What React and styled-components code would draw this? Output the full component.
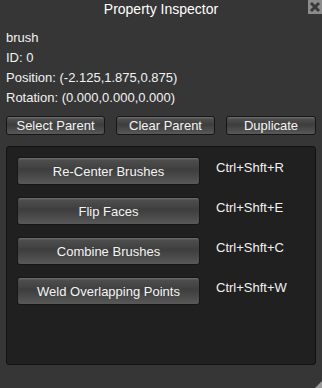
import React from 'react';
import styled, { createGlobalStyle } from 'styled-components';

const Global = createGlobalStyle`
  html, body {
    margin:0;
    padding:0;
    background:#363636;
  }
  body{
    font-family:"Liberation Sans", Arial, sans-serif;
    color:#f0f0f0;
  }
`

const Window = styled.div`
  width:322px;
  height:388px;
  background:#363636;
  position:relative;
  overflow:hidden;
  display:flex;
  flex-direction:column;
`

const TitleBar = styled.div`
  height:17px;
  display:flex;
  align-items:center;
  justify-content:center;
  font-size:14px;
  color:#fff;
`

const CloseBox = styled.div`
  position:absolute;
  top:0;
  right:0;
  width:14px;
  height:14px;
  background:#8c8c8c;
  display:flex;
  align-items:center;
  justify-content:center;
`

const Info = styled.div`
  display:flex;
  flex-direction:column;
  padding:11px 6px 0 6px;
`

const InfoLine = styled.div`
  font-size:13px;
  line-height:20px;
  height:20px;
  color:#f2f2f2;
`

const ButtonRow = styled.div`
  display:flex;
  gap:11px;
  padding:8px 6px 0 6px;
`

const Button = styled.div`
  box-sizing:border-box;
  width:${p => p.w}px;
  height:${p => p.h}px;
  border:1px solid #161616;
  border-radius:3px;
  background:linear-gradient(#727272 0px, #4e4e4e 2px, #3e3e3e 45%, #4e4e4e 80%, #595959 100%);
  display:flex;
  align-items:center;
  justify-content:center;
  font-size:13px;
  color:#f4f4f4;
  white-space:nowrap;
  padding-top:${p => p.pt || 0}px;
`

const Panel = styled.div`
  box-sizing:border-box;
  margin:11px 6px 0 6px;
  height:219px;
  background:#202020;
  border:1px solid #121212;
  border-radius:3px;
  padding:10px 0 0 10px;
  display:flex;
  flex-direction:column;
  gap:12px;
`

const ActionRow = styled.div`
  display:flex;
  align-items:flex-start;
  gap:16px;
`

const Shortcut = styled.div`
  font-size:13px;
  color:#f2f2f2;
  padding-top:3px;
`

const Grip = styled.div`
  position:absolute;
  right:0;
  bottom:0;
  width:0;
  height:0;
  border-left:7px solid transparent;
  border-bottom:7px solid #9a9a9a;
`

const actions = [
  ['Re-Center Brushes', 'Ctrl+Shft+R'],
  ['Flip Faces', 'Ctrl+Shft+E'],
  ['Combine Brushes', 'Ctrl+Shft+C'],
  ['Weld Overlapping Points', 'Ctrl+Shft+W'],
]

export default function App() {
  return (
    <>
      <Global />
      <Window>
        <TitleBar>Property Inspector</TitleBar>
        <CloseBox>
          <svg width="12" height="12" viewBox="0 0 12 12">
            <path d="M2 2 L10 10 M10 2 L2 10" stroke="#3a3a3a" strokeWidth="3" />
          </svg>
        </CloseBox>
        <Info>
          <InfoLine>brush</InfoLine>
          <InfoLine>ID: 0</InfoLine>
          <InfoLine>Position: (-2.125,1.875,0.875)</InfoLine>
          <InfoLine>Rotation: (0.000,0.000,0.000)</InfoLine>
        </Info>
        <ButtonRow>
          <Button w={99} h={19}>Select Parent</Button>
          <Button w={99} h={19}>Clear Parent</Button>
          <Button w={90} h={19}>Duplicate</Button>
        </ButtonRow>
        <Panel>
          {actions.map(([label, keys]) => (
            <ActionRow key={label}>
              <Button w={183} h={28} pt={1}>{label}</Button>
              <Shortcut>{keys}</Shortcut>
            </ActionRow>
          ))}
        </Panel>
        <Grip />
      </Window>
    </>
  )
}
